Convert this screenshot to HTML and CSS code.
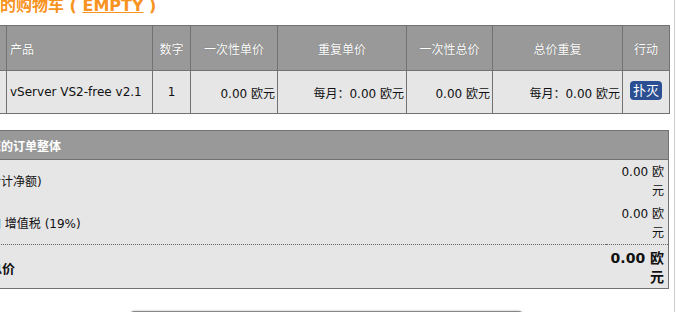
FILE: index.html
```html
<!DOCTYPE html>
<html>
<head>
    <meta charset="utf-8">
    <title>购物车</title>
    <link rel="stylesheet" href="styles.css">
</head>
<body>
    <div class="page">
        <h2 class="cart-title">您的购物车 ( <a href="#">EMPTY</a> )</h2>

        <table class="cart">
            <colgroup>
                <col style="width: 46px">
                <col style="width: 146px">
                <col style="width: 38px">
                <col style="width: 87px">
                <col style="width: 129px">
                <col style="width: 86px">
                <col style="width: 130px">
                <col style="width: 47px">
            </colgroup>
            <thead>
                <tr>
                    <th></th>
                    <th class="left">产品</th>
                    <th>数字</th>
                    <th>一次性单价</th>
                    <th>重复单价</th>
                    <th>一次性总价</th>
                    <th>总价重复</th>
                    <th>行动</th>
                </tr>
            </thead>
            <tbody>
                <tr>
                    <td></td>
                    <td class="left">vServer VS2-free v2.1</td>
                    <td class="center">1</td>
                    <td class="right">0.00 欧元</td>
                    <td class="right">每月：0.00 欧元</td>
                    <td class="right">0.00 欧元</td>
                    <td class="right">每月：0.00 欧元</td>
                    <td class="center"><button class="remove">扑灭</button></td>
                </tr>
            </tbody>
        </table>

        <table class="summary">
            <colgroup>
                <col>
                <col style="width: 62px">
            </colgroup>
            <thead>
                <tr>
                    <th colspan="2">您的订单整体</th>
                </tr>
            </thead>
            <tbody>
                <tr>
                    <td class="label">合计净额)</td>
                    <td class="amount">0.00 欧元</td>
                </tr>
                <tr>
                    <td class="label">加 增值税 (19%)</td>
                    <td class="amount">0.00 欧元</td>
                </tr>
                <tr class="total">
                    <td class="label">总价</td>
                    <td class="amount">0.00 欧元</td>
                </tr>
            </tbody>
        </table>

        <div class="actions">
            <button class="checkout">继续结账</button>
        </div>
    </div>
</body>
</html>
```

FILE: styles.css
```css
* {
    margin: 0;
    padding: 0;
    box-sizing: border-box;
}

html, body {
    overflow: hidden;
}

body {
    font-family: "DejaVu Sans", "Noto Sans CJK SC", sans-serif;
    font-size: 12px;
    background: #fff;
    color: #111;
}

.page {
    margin-left: -40px;
    width: 715px;
    height: 316px;
    padding-right: 5px;
    border-right: 1px solid #cfcfcf;
}

.cart-title {
    margin-top: -4px;
    margin-bottom: 9px;
    padding-left: 24px;
    font-size: 16px;
    line-height: 20px;
    font-weight: bold;
    color: #f7931e;
}

.cart-title a {
    color: #f7931e;
}

table {
    width: 709px;
    border-collapse: collapse;
    table-layout: fixed;
    background: #e6e6e6;
}

.cart th,
.cart td {
    border: 1px solid #727272;
}

.cart th {
    height: 45px;
    background: #999;
    color: #fff;
    font-weight: normal;
    text-align: center;
    text-shadow: 0 0 1px rgba(0, 0, 0, 0.35);
}

.cart td {
    height: 43px;
}

.cart .left {
    text-align: left;
    padding-left: 3px;
}

.cart .center {
    text-align: center;
}

.cart .right {
    text-align: right;
    padding-right: 2px;
    white-space: nowrap;
}

.remove {
    font-family: "DejaVu Sans", "Noto Sans CJK SC", sans-serif;
    font-size: 13px;
    line-height: 17px;
    padding: 1px 3px;
    margin-top: -3px;
    border: none;
    border-radius: 4px;
    background: #2b4f92;
    color: #fff;
    vertical-align: middle;
}

.summary {
    margin-top: 16px;
    border: 1px solid #727272;
}

.summary th {
    height: 29px;
    padding-left: 28px;
    background: #999;
    color: #fff;
    text-align: left;
    border-bottom: 1px solid #727272;
}

.summary td {
    line-height: 19px;
    padding: 3px 4px 1px 28px;
}

.summary .label {
    vertical-align: middle;
}

.summary .amount {
    padding-left: 4px;
    text-align: right;
}

.summary .total {
    border-top: 1px dotted #666;
}

.summary .total td {
    font-weight: bold;
    padding-top: 4px;
    padding-bottom: 1px;
}

.summary .total .amount {
    font-size: 14px;
}

.summary .total .label {
    font-size: 13px;
}

.actions {
    padding-top: 22px;
    padding-left: 168px;
}

.checkout {
    width: 397px;
    height: 34px;
    border: 1px solid #4d4d4d;
    border-top-color: #888;
    border-radius: 7px;
    background: #3b6cc0;
    box-shadow: 0 0 2px rgba(0, 0, 0, 0.4);
    color: #fff;
    font-family: "DejaVu Sans", "Noto Sans CJK SC", sans-serif;
    font-size: 14px;
}
```
